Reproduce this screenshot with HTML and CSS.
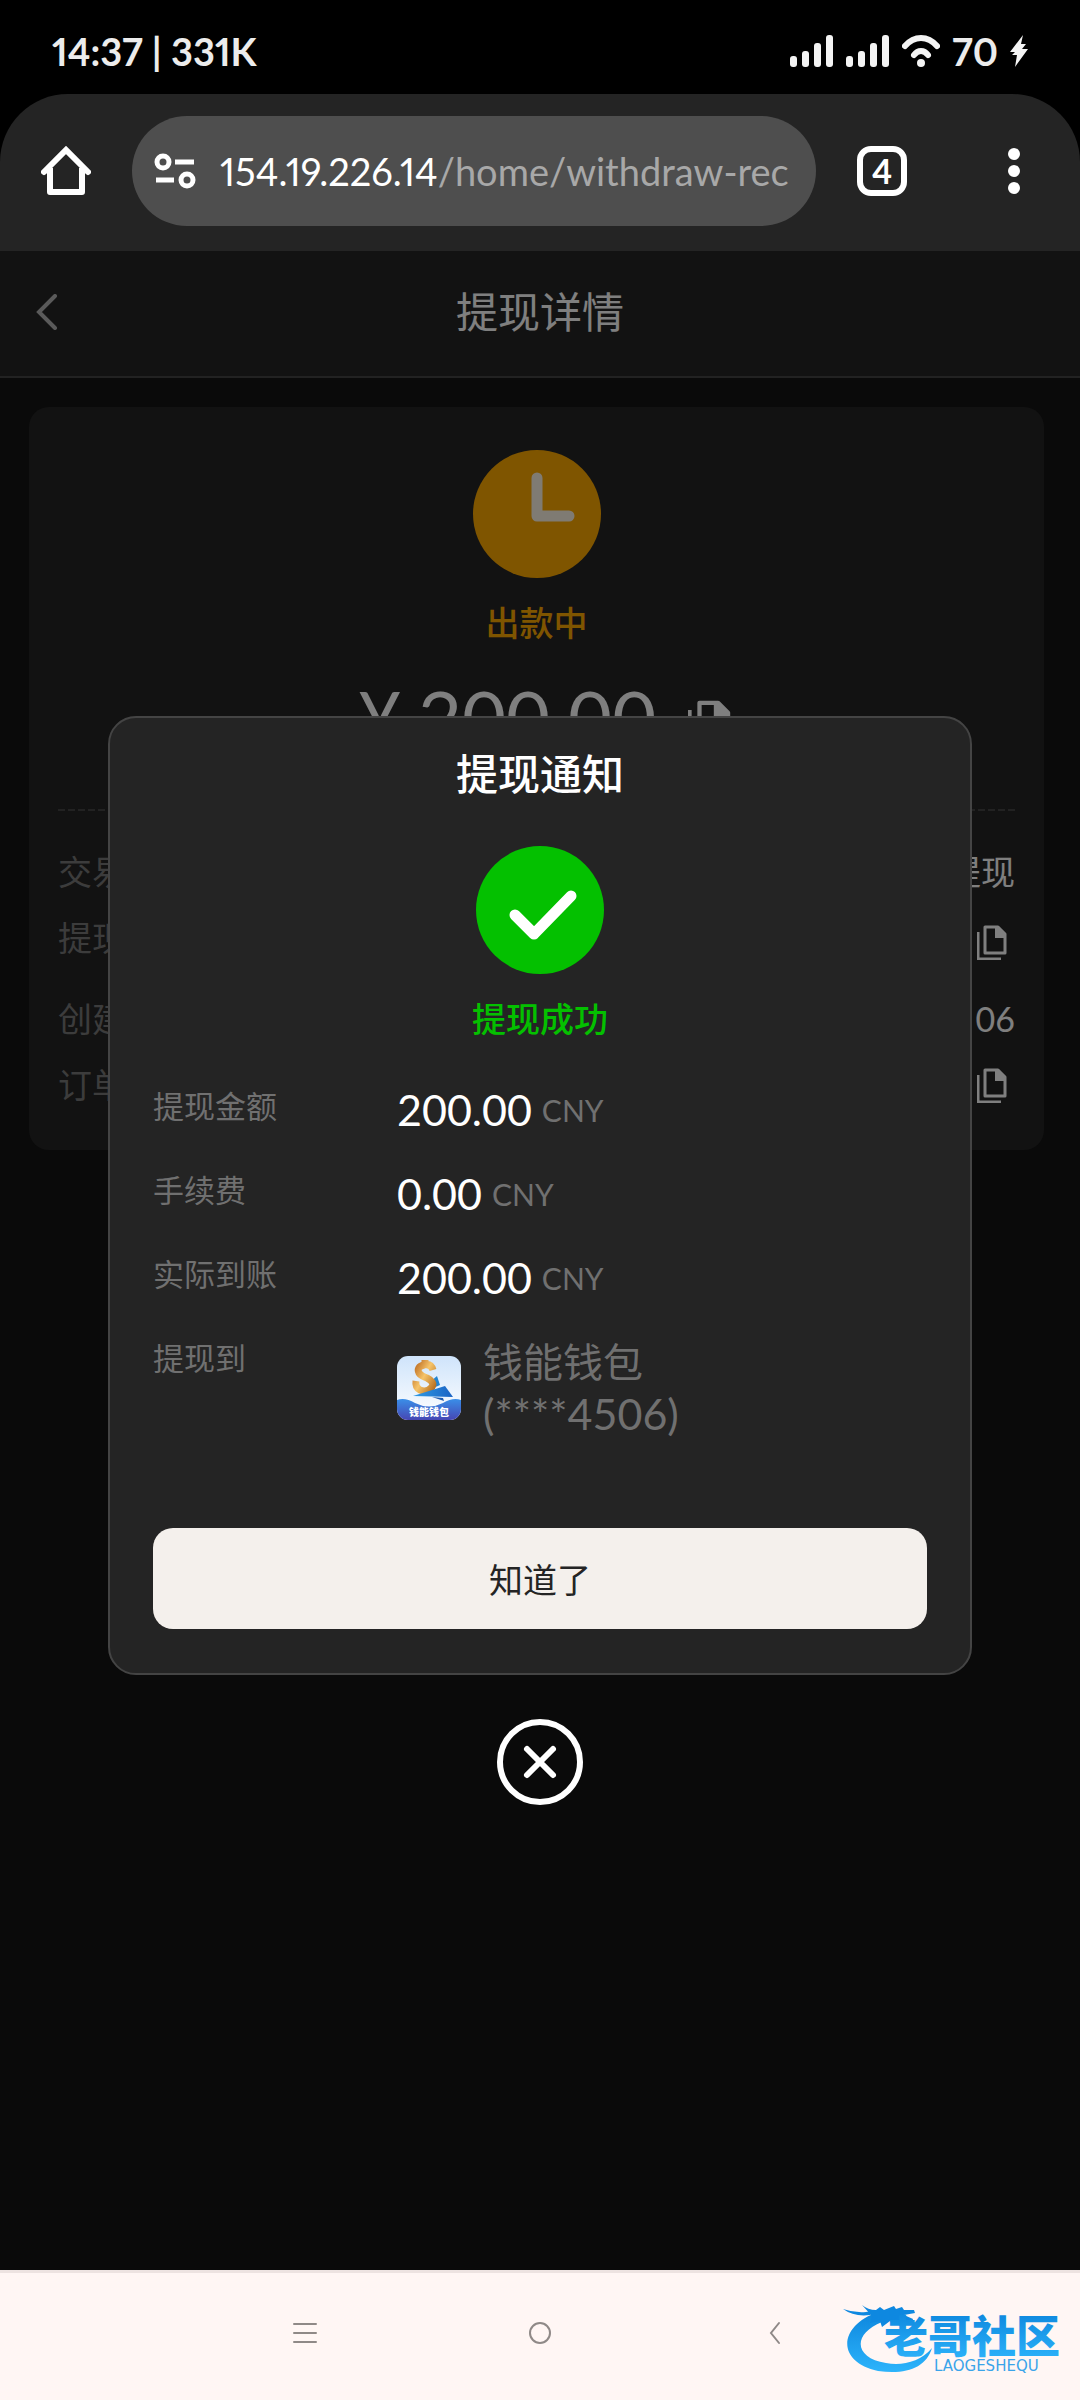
FILE: index.html
```html
<!DOCTYPE html>
<html lang="zh-CN">
<head>
<meta charset="utf-8">
<meta name="viewport" content="width=device-width, initial-scale=1">
<title>提现详情</title>
<link rel="stylesheet" href="styles.css">
</head>
<body>
<svg class="defs" width="0" height="0" aria-hidden="true">
  <symbol id="copy" viewBox="0 0 30 35">
    <path d="M1 7V34H24" fill="none" stroke="currentColor" stroke-width="3"/>
    <path d="M8 2H21L28 9V28H8Z" fill="none" stroke="currentColor" stroke-width="3" stroke-linejoin="round"/>
    <path d="M18 2H21L29 10V13H18Z" fill="currentColor"/>
  </symbol>
  <symbol id="signal" viewBox="0 0 44 32">
    <g fill="#f4f4f4">
      <rect x="0" y="21" width="7" height="11" rx="3"/>
      <rect x="12" y="16" width="7" height="16" rx="3"/>
      <rect x="24" y="8" width="7" height="24" rx="3"/>
      <rect x="36" y="0" width="7" height="32" rx="3"/>
    </g>
  </symbol>
</svg>

<div class="status-bar">
  <span>14:37 | 331K</span>
  <div class="status-icons">
    <svg width="44" height="32"><use href="#signal"/></svg>
    <svg width="44" height="32"><use href="#signal"/></svg>
    <svg width="38" height="32" viewBox="0 0 38 32" fill="none" stroke="#f4f4f4" stroke-width="6" stroke-linecap="round"><path d="M3 11Q10 3 19 3T35 11M12 20Q15 16 19 16T26 20"/><circle cx="19" cy="28" r="4" fill="#f4f4f4" stroke="none"/></svg>
    <span>70</span>
    <svg width="18" height="32" viewBox="0 0 18 32"><path d="M13 0L0 17H5L2 20H7L5 32L18 14H12L16 9H11Z" fill="#f4f4f4"/></svg>
  </div>
</div>

<nav class="toolbar">
  <button class="icon-button" aria-label="主页"><svg width="50" height="50" viewBox="0 0 50 50" fill="none" stroke="#fff" stroke-width="6" stroke-linejoin="round"><path d="M9 22V46H41V22"/><path d="M3 26L25 4L47 26" stroke-linecap="round" stroke-linejoin="miter"/></svg></button>
  <button class="address">
    <svg width="42" height="36" viewBox="0 0 42 36" fill="none" stroke="#fff" stroke-width="5"><circle cx="9" cy="9" r="6"/><path d="M21 9H40M2 27H20"/><circle cx="33" cy="27" r="6"/></svg>
    <span class="url">154.19.226.14<span class="path">/home/withdraw-rec</span></span>
  </button>
  <button class="tabs" aria-label="标签页">4</button>
  <button class="icon-button" aria-label="菜单"><svg width="12" height="46" viewBox="0 0 12 46" fill="#fff"><circle cx="6" cy="6" r="6"/><circle cx="6" cy="23" r="6"/><circle cx="6" cy="40" r="6"/></svg></button>
</nav>

<div class="page">
  <header class="page-header">
    <button class="back" aria-label="返回"><svg width="22" height="36" viewBox="0 0 22 36" fill="none" stroke="#b4b4b4" stroke-width="4" stroke-linecap="round"><path d="M19 2L3 18L19 34"/></svg></button>
    <h1>提现详情</h1>
  </header>

  <main class="card">
    <svg class="badge" viewBox="0 0 128 128"><circle cx="64" cy="64" r="64" fill="#fa0"/><path d="M64 28V66H96" fill="none" stroke="#fff" stroke-opacity=".9" stroke-width="11" stroke-linecap="round" stroke-linejoin="round"/></svg>
    <p class="state pending">出款中</p>
    <p class="amount"><span>¥</span><span>200.00</span><svg width="43" height="50"><use href="#copy"/></svg></p>
    <div class="divider"></div>
    <dl class="details">
      <div><dt>交易</dt><dd>提现</dd></div>
      <div class="tall"><dt>提现</dt><dd><button class="copy" aria-label="复制"><svg width="30" height="35"><use href="#copy"/></svg></button></dd></div>
      <div><dt>创建</dt><dd>06</dd></div>
      <div><dt>订单</dt><dd><button class="copy" aria-label="复制"><svg width="30" height="35"><use href="#copy"/></svg></button></dd></div>
    </dl>
  </main>

  <div class="overlay">
    <section class="dialog" role="dialog" aria-labelledby="dialog-title">
      <h2 id="dialog-title">提现通知</h2>
      <svg class="badge" viewBox="0 0 128 128"><circle cx="64" cy="64" r="64" fill="#04c000"/><path d="M39 69L58 88L95 50" fill="none" stroke="#fff" stroke-width="11" stroke-linecap="round" stroke-linejoin="round"/></svg>
      <p class="state success">提现成功</p>
      <dl class="summary">
        <dt>提现金额</dt><dd>200.00 <small>CNY</small></dd>
        <dt>手续费</dt><dd>0.00 <small>CNY</small></dd>
        <dt>实际到账</dt><dd>200.00 <small>CNY</small></dd>
        <dt>提现到</dt>
        <dd class="wallet">
          <svg width="64" height="64" viewBox="0 0 64 64">
            <defs>
              <linearGradient id="sky" x2="0" y2="1"><stop stop-color="#cfe4fb"/><stop offset="1" stop-color="#fff"/></linearGradient>
              <linearGradient id="sea" x2="0" y2="1"><stop stop-color="#3a8fe8"/><stop offset="1" stop-color="#4646b4"/></linearGradient>
              <linearGradient id="gold" x2="1" y2="1"><stop stop-color="#b8651c"/><stop offset=".5" stop-color="#f6c46a"/><stop offset="1" stop-color="#b8701f"/></linearGradient>
              <linearGradient id="plane" x2="1"><stop stop-color="#2f9be4"/><stop offset="1" stop-color="#1a63c4"/></linearGradient>
              <clipPath id="tile"><rect width="64" height="64" rx="11"/></clipPath>
            </defs>
            <g clip-path="url(#tile)">
              <rect width="64" height="64" fill="url(#sky)"/>
              <path d="M0 44Q8 41 18 47Q32 54 46 47Q56 41 64 44V64H0Z" fill="url(#sea)"/>
              <path d="M33 26L40 20L43 29L32 34Z" fill="#2384cf"/>
              <path d="M36 14Q34 7 27 9Q19 11 22 17Q24 20 30 22Q38 26 35 31Q30 37 23 34Q18 31 19 25M28 9V4" fill="none" stroke="url(#gold)" stroke-width="7"/>
              <path d="M16 40L48 30L56 41Z" fill="url(#plane)"/>
              <path d="M35 41L46 42L47 45Z" fill="#1c5cb0"/>
              <text x="32" y="60" text-anchor="middle" class="tile-text">钱能钱包</text>
            </g>
          </svg>
          <p>钱能钱包<br><span class="account">(****4506)</span></p>
        </dd>
      </dl>
      <button class="confirm">知道了</button>
    </section>
    <button class="close" aria-label="关闭"><svg width="86" height="86" viewBox="0 0 86 86" fill="none" stroke="#fff" stroke-width="6" stroke-linecap="round"><circle cx="43" cy="43" r="40"/><path d="M30 30L56 56M56 30L30 56"/></svg></button>
  </div>
</div>

<footer class="system-nav">
  <button aria-label="最近任务"><svg width="24" height="24" viewBox="0 0 24 24"><path d="M1 3H23M1 12H23M1 21H23"/></svg></button>
  <button aria-label="主屏幕"><svg width="24" height="24" viewBox="0 0 24 24"><circle cx="12" cy="12" r="10"/></svg></button>
  <button aria-label="后退"><svg width="24" height="24" viewBox="0 0 24 24"><path d="M16 2L8 12L16 22"/></svg></button>
  <svg class="brand" width="226" height="80" viewBox="0 0 226 80" role="img" aria-label="老哥社区">
    <defs><linearGradient id="brand" x2="0" y2="1"><stop stop-color="#0d86dd"/><stop offset="1" stop-color="#2db4fb"/></linearGradient></defs>
    <path d="M36 8C-4 22 -6 58 36 67C64 71 84 64 90 44C78 58 60 62 44 59C12 54 10 30 40 18Z" fill="url(#brand)"/>
    <path d="M1 5Q12 9 24 8Q30 6 34 9L28 11Q12 13 1 5ZM20 1Q26 6 34 6L38 3L42 6L52 2L54 5L60 3L62 6L72 6L73 9L62 11L71 15L70 19L60 17L52 21L48 17L40 23L38 17L28 19L30 12Z" fill="#0e88e0"/>
    <text x="42" y="49" class="brand-name" fill="url(#brand)">老哥社区</text>
    <text x="92" y="67" class="brand-latin">LAOGESHEQU</text>
  </svg>
</footer>
</body>
</html>
```
FILE: styles.css
```css
* {
  box-sizing: border-box;
}

body {
  margin: 0;
  min-height: 100vh;
  display: flex;
  flex-direction: column;
  background: #000;
  color: #fff;
  font-family: Lato, "Noto Sans CJK SC", sans-serif;
}

h1, h2, p, dl, dd {
  margin: 0;
  font-weight: 400;
}

button {
  padding: 0;
  border: 0;
  background: none;
  color: inherit;
  font: inherit;
}

svg {
  display: block;
  flex: none;
}

.defs {
  position: absolute;
}

.status-bar {
  display: flex;
  justify-content: space-between;
  align-items: center;
  height: 94px;
  padding: 8px 52px 0;
  color: #ececec;
  font-size: 38px;
  font-weight: 700;
  font-variant-numeric: proportional-nums;
}

.status-icons {
  display: flex;
  align-items: center;
  gap: 12px;
}

.toolbar {
  display: flex;
  align-items: center;
  gap: 41px;
  height: 157px;
  padding: 0 60px 4px 41px;
  border-radius: 68px 68px 0 0;
  background: #242424;
}

.address {
  display: flex;
  flex: 1;
  min-width: 0;
  align-items: center;
  gap: 24px;
  height: 110px;
  padding: 0 22px;
  border-radius: 55px;
  background: #4e4e4e;
  font-size: 38px;
  text-align: left;
  font-variant-numeric: proportional-nums;
}

.url {
  flex: 1;
  overflow: hidden;
  white-space: nowrap;
}

.path {
  color: #a8a8a8;
}

.tabs {
  width: 50px;
  height: 50px;
  margin-right: 60px;
  border: 6px solid #fff;
  border-radius: 14px;
  font-size: 34px;
  font-weight: 700;
  line-height: 38px;
}

.page {
  position: relative;
  flex: 1;
  background: #141414;
}

.page-header {
  display: grid;
  grid-template-columns: 1fr auto 1fr;
  align-items: center;
  height: 127px;
  padding: 0 36px 4px;
  border-bottom: 2px solid #444;
  background: #242424;
}

.page-header h1,
.dialog h2 {
  font-size: 42px;
  line-height: 56px;
}

.dialog h2 {
  font-weight: 500;
}

.card {
  display: flex;
  flex-direction: column;
  align-items: center;
  margin: 29px 36px 0 29px;
  padding: 43px 29px;
  border-radius: 20px;
  background: #242424;
}

.badge {
  width: 128px;
  height: 128px;
}

.state {
  margin-top: 23px;
  font-size: 34px;
  font-weight: 500;
  line-height: 44px;
}

.pending {
  color: #fa0;
}

.success {
  color: #04c000;
}

.amount {
  display: flex;
  align-items: center;
  gap: 16px;
  margin-top: 32px;
  padding-left: 16px;
  font-size: 76px;
  line-height: 80px;
}

.amount svg {
  margin: 16px 0 0 16px;
}

.divider {
  width: 100%;
  height: 2px;
  margin: 52px 0 39px;
  background: repeating-linear-gradient(90deg, #444 0 7px, transparent 7px 10px);
}

.details {
  display: grid;
  gap: 22px;
  width: 100%;
  font-size: 34px;
  line-height: 44px;
}

.details div {
  display: flex;
  align-items: flex-start;
  justify-content: space-between;
}

.details .tall {
  min-height: 59px;
}

.details dt {
  color: #787878;
}

.details dd {
  display: flex;
  align-items: center;
  min-height: 44px;
}

.details .tall dd {
  min-height: 52px;
}

.copy {
  margin-right: 8px;
}

.overlay {
  position: absolute;
  inset: 0;
  display: flex;
  flex-direction: column;
  align-items: center;
  justify-content: center;
  gap: 44px;
  background: rgba(0, 0, 0, .5);
}

.dialog {
  display: flex;
  flex-direction: column;
  align-items: center;
  width: 80%;
  padding: 28px 43px 44px;
  border: 2px solid #444;
  border-radius: 28px;
  background: #242424;
}

.dialog .badge {
  margin-top: 44px;
}

.summary {
  display: grid;
  grid-template-columns: auto 1fr;
  column-gap: 120px;
  row-gap: 32px;
  width: 100%;
  margin-top: 43px;
}

.summary dt {
  color: #707070;
  font-size: 31px;
  line-height: 44px;
}

.summary dd {
  display: flex;
  align-items: center;
  gap: 10px;
  font-size: 43px;
  line-height: 52px;
}

.summary small {
  color: #707070;
  font-size: 30px;
}

.summary .wallet {
  gap: 22px;
  color: #707070;
  font-size: 40px;
}

.account {
  display: block;
  font-size: 43px;
}

.wallet br {
  display: none;
}

.tile-text {
  fill: #fff;
  font-size: 10px;
  font-weight: 900;
}

.confirm {
  width: 100%;
  height: 101px;
  margin-top: 88px;
  border-radius: 20px;
  background: #f4f0ec;
  color: #242424;
  font-size: 34px;
}

.system-nav {
  position: relative;
  display: flex;
  align-items: center;
  justify-content: center;
  gap: 211px;
  height: 130px;
  padding-bottom: 8px;
  border-top: 3px solid #ede3e1;
  background: #fff6f4;
}

.system-nav button svg {
  fill: none;
  stroke: #8f8987;
  stroke-width: 2;
  stroke-linecap: round;
}

.brand {
  position: absolute;
  right: 12px;
  bottom: 16px;
}

.brand-name {
  font-size: 44px;
  font-weight: 900;
}

.brand-latin {
  fill: #3aa4ea;
  font-family: "DejaVu Sans", sans-serif;
  font-size: 15px;
}
```
